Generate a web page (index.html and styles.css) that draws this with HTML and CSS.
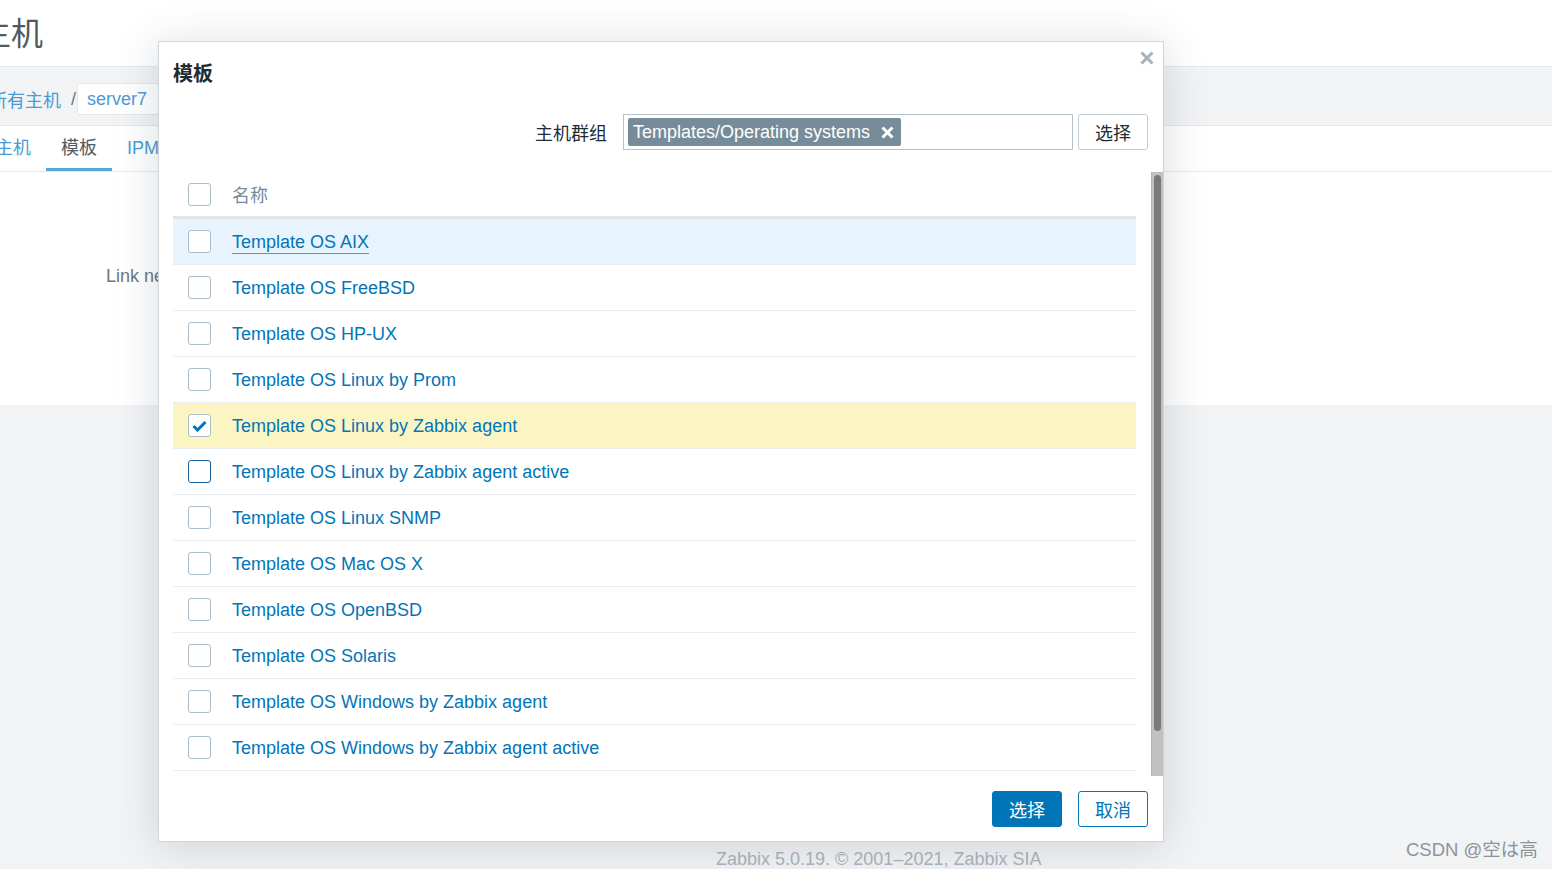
FILE: index.html
```html
<!DOCTYPE html>
<html lang="zh">
<head>
<meta charset="utf-8">
<title>主机</title>
<link rel="stylesheet" href="styles.css">
</head>
<body>
<div class="page">
  <header class="top">
    <h1 class="page-title">主机</h1>
  </header>
  <div class="crumbs">
    <span class="crumb">所有主机</span>
    <span class="sep">/</span>
    <span class="crumb-box">server7</span>
  </div>
  <nav class="tabs">
    <span class="tab">主机</span>
    <span class="tab active">模板</span>
    <span class="tab">IPMI</span>
  </nav>
  <main class="content">
    <div class="content-row"><span class="content-label">Link new templates</span></div>
  </main>
  <footer class="foot">Zabbix 5.0.19. © 2001–2021, Zabbix SIA</footer>
</div>

<div class="dialog">
  <div class="dlg-head">
    <h2 class="dlg-title">模板</h2>
    <button class="dlg-close" aria-label="close">
      <svg width="14" height="14" viewBox="0 0 14 14"><path d="M1.5 1.5 L12.5 12.5 M12.5 1.5 L1.5 12.5" stroke="#a7b1b9" stroke-width="3" fill="none"/></svg>
    </button>
  </div>
  <div class="filter">
    <label class="filter-label">主机群组</label>
    <div class="multiselect">
      <span class="tag">Templates/Operating systems
        <svg class="tag-x" width="13" height="13" viewBox="0 0 13 13"><path d="M1.5 1.5 L11.5 11.5 M11.5 1.5 L1.5 11.5" stroke="#fff" stroke-width="3" fill="none"/></svg>
      </span>
    </div>
    <button class="btn-alt">选择</button>
  </div>
  <div class="list-wrap">
    <div class="list">
      <div class="row head">
        <span class="cb-cell"><span class="cb"></span></span>
        <span class="col-name">名称</span>
      </div>
      <div class="row hover">
        <span class="cb-cell"><span class="cb"></span></span>
        <a class="link underline">Template OS AIX</a>
      </div>
      <div class="row">
        <span class="cb-cell"><span class="cb"></span></span>
        <a class="link">Template OS FreeBSD</a>
      </div>
      <div class="row">
        <span class="cb-cell"><span class="cb"></span></span>
        <a class="link">Template OS HP-UX</a>
      </div>
      <div class="row">
        <span class="cb-cell"><span class="cb"></span></span>
        <a class="link">Template OS Linux by Prom</a>
      </div>
      <div class="row selected">
        <span class="cb-cell"><span class="cb checked">
          <svg width="15" height="12" viewBox="0 0 15 12"><path d="M1.5 6 L5.5 10 L13.5 2" stroke="#0275b8" stroke-width="3" fill="none"/></svg>
        </span></span>
        <a class="link">Template OS Linux by Zabbix agent</a>
      </div>
      <div class="row">
        <span class="cb-cell"><span class="cb focus"></span></span>
        <a class="link">Template OS Linux by Zabbix agent active</a>
      </div>
      <div class="row">
        <span class="cb-cell"><span class="cb"></span></span>
        <a class="link">Template OS Linux SNMP</a>
      </div>
      <div class="row">
        <span class="cb-cell"><span class="cb"></span></span>
        <a class="link">Template OS Mac OS X</a>
      </div>
      <div class="row">
        <span class="cb-cell"><span class="cb"></span></span>
        <a class="link">Template OS OpenBSD</a>
      </div>
      <div class="row">
        <span class="cb-cell"><span class="cb"></span></span>
        <a class="link">Template OS Solaris</a>
      </div>
      <div class="row">
        <span class="cb-cell"><span class="cb"></span></span>
        <a class="link">Template OS Windows by Zabbix agent</a>
      </div>
      <div class="row">
        <span class="cb-cell"><span class="cb"></span></span>
        <a class="link">Template OS Windows by Zabbix agent active</a>
      </div>
    </div>
    <div class="scrollbar"><div class="thumb"></div></div>
  </div>
  <div class="dlg-foot">
    <button class="btn-primary">选择</button>
    <button class="btn-outline">取消</button>
  </div>
</div>

<div class="watermark">CSDN @空は高</div>
</body>
</html>
```

FILE: styles.css
```css
* { box-sizing: border-box; }

html, body {
  margin: 0;
  padding: 0;
}

body {
  width: 1552px;
  height: 869px;
  overflow: hidden;
  background: #f2f3f5;
  font-family: "Liberation Sans", Arial, "Noto Sans CJK SC", sans-serif;
  font-size: 18px;
  color: #1f2c33;
  position: relative;
}

.page {
  display: flex;
  flex-direction: column;
}

.top {
  height: 67px;
  background: #fff;
  border-bottom: 1px solid #e6e9ec;
}

.page-title {
  margin: 0;
  padding-top: 10px;
  margin-left: -21px;
  font-size: 32px;
  font-weight: normal;
  line-height: 42px;
  color: #4f5a61;
  font-family: "Noto Sans CJK SC", sans-serif;
}

.crumbs {
  height: 59px;
  background: #f2f3f5;
  border-bottom: 1px solid #e4e7ea;
  display: flex;
  align-items: flex-start;
  padding-top: 16px;
  margin-left: -11px;
}

.crumb {
  color: #4b9bd2;
  font-family: "Noto Sans CJK SC", sans-serif;
  font-size: 18px;
  line-height: 32px;
}

.sep {
  color: #6a747b;
  margin: 0 1px 0 10px;
  line-height: 32px;
}

.crumb-box {
  background: #fff;
  border: 1px solid #e4e8eb;
  border-radius: 2px;
  height: 32px;
  line-height: 30px;
  padding: 0 9px;
  color: #4b9bd2;
  width: 90px;
}

.tabs {
  height: 46px;
  background: #fff;
  border-bottom: 1px solid #e6e9ec;
  display: flex;
  margin-left: -20px;
}

.tab {
  padding: 2px 15px 0;
  line-height: 40px;
  color: #4b9bd2;
  font-family: "Liberation Sans", "Noto Sans CJK SC", sans-serif;
  border-bottom: 3px solid transparent;
}

.tab.active {
  color: #4f5a61;
  border-bottom-color: #5aa6d6;
}

.content {
  height: 233px;
  background: #fff;
}

.content-row {
  padding: 94px 0 0 106px;
}

.content-label {
  color: #6e777d;
}

.foot {
  height: 464px;
  padding: 444px 0 0 716px;
  color: #abb4bb;
  font-size: 18px;
  line-height: 20px;
}

/* dialog */
.dialog {
  position: absolute;
  left: 158px;
  top: 41px;
  width: 1006px;
  height: 801px;
  background: #fff;
  border: 1px solid #cfd6db;
  box-shadow: 0 4px 40px rgba(40, 55, 70, 0.18);
  display: flex;
  flex-direction: column;
}

.dlg-head {
  position: relative;
  padding: 16px 15px 0 14px;
}

.dlg-title {
  margin: 0;
  font-family: "Noto Sans CJK SC", sans-serif;
  font-size: 20px;
  font-weight: bold;
  line-height: 30px;
  color: #1f2c33;
}

.dlg-close {
  position: absolute;
  right: 9px;
  top: 9px;
  width: 14px;
  height: 14px;
  padding: 0;
  border: 0;
  background: none;
  display: flex;
}

.filter {
  margin-top: 26px;
  display: flex;
  justify-content: flex-end;
  align-items: center;
  padding-right: 15px;
  height: 36px;
}

.filter-label {
  font-family: "Noto Sans CJK SC", sans-serif;
  font-size: 18px;
  margin-right: 16px;
  color: #1f2c33;
}

.multiselect {
  width: 450px;
  height: 36px;
  border: 1px solid #b7c3ca;
  padding: 3px 4px;
  display: flex;
  align-items: center;
}

.tag {
  background: #768d99;
  color: #fff;
  height: 28px;
  line-height: 28px;
  border-radius: 2px;
  padding: 0 7px 0 5px;
  display: flex;
  align-items: center;
  gap: 11px;
}

.tag-x { display: block; }

.btn-alt {
  margin-left: 5px;
  width: 70px;
  height: 36px;
  background: #fff;
  border: 1px solid #c4cdd3;
  border-radius: 3px;
  font-family: "Noto Sans CJK SC", sans-serif;
  font-size: 18px;
  color: #1f2c33;
  padding: 0;
}

.list-wrap {
  margin-top: 22px;
  height: 604px;
  display: flex;
}

.list {
  flex: 1;
  padding: 0 15px 0 14px;
  overflow: hidden;
}

.row {
  height: 46px;
  display: flex;
  align-items: center;
  border-bottom: 1px solid #ebeef0;
}

.row.head {
  height: 47px;
  border-bottom: 3px solid #dfe4e7;
}

.row.hover { background: #e8f4fd; }
.row.selected { background: #fbf5c4; }

.cb-cell {
  width: 59px;
  padding-left: 15px;
  display: flex;
}

.cb {
  width: 23px;
  height: 23px;
  border: 1px solid #acbcc6;
  border-radius: 3px;
  background: #fff;
  display: flex;
  align-items: center;
  justify-content: center;
}

.cb.focus { border-color: #1d5f93; }

.col-name {
  color: #768d99;
  font-family: "Noto Sans CJK SC", sans-serif;
  font-size: 18px;
}

.link {
  color: #0275b8;
  line-height: 22px;
  padding-top: 1px;
}

.link.underline {
  border-bottom: 1px solid #4a9bd0;
}

.scrollbar {
  width: 12px;
  background: #c1c1c1;
  padding: 3px 2px 0 2px;
  border-left: 1px solid #b3b3b3;
}

.thumb {
  width: 7px;
  height: 556px;
  background: #7a7a7a;
  border-radius: 4px;
}

.dlg-foot {
  padding: 15px 15px 0 0;
  display: flex;
  justify-content: flex-end;
  gap: 16px;
}

.btn-primary, .btn-outline {
  width: 70px;
  height: 36px;
  border-radius: 3px;
  font-family: "Noto Sans CJK SC", sans-serif;
  font-size: 18px;
  padding: 0;
}

.btn-primary {
  background: #0275b8;
  border: 1px solid #0275b8;
  color: #fff;
}

.btn-outline {
  background: #fff;
  border: 1px solid #0275b8;
  color: #0275b8;
}

.watermark {
  position: absolute;
  left: 1406px;
  top: 838px;
  font-family: "Liberation Sans", "Noto Sans CJK JP", sans-serif;
  font-size: 18.5px;
  line-height: 24px;
  color: #8e9499;
}
```
